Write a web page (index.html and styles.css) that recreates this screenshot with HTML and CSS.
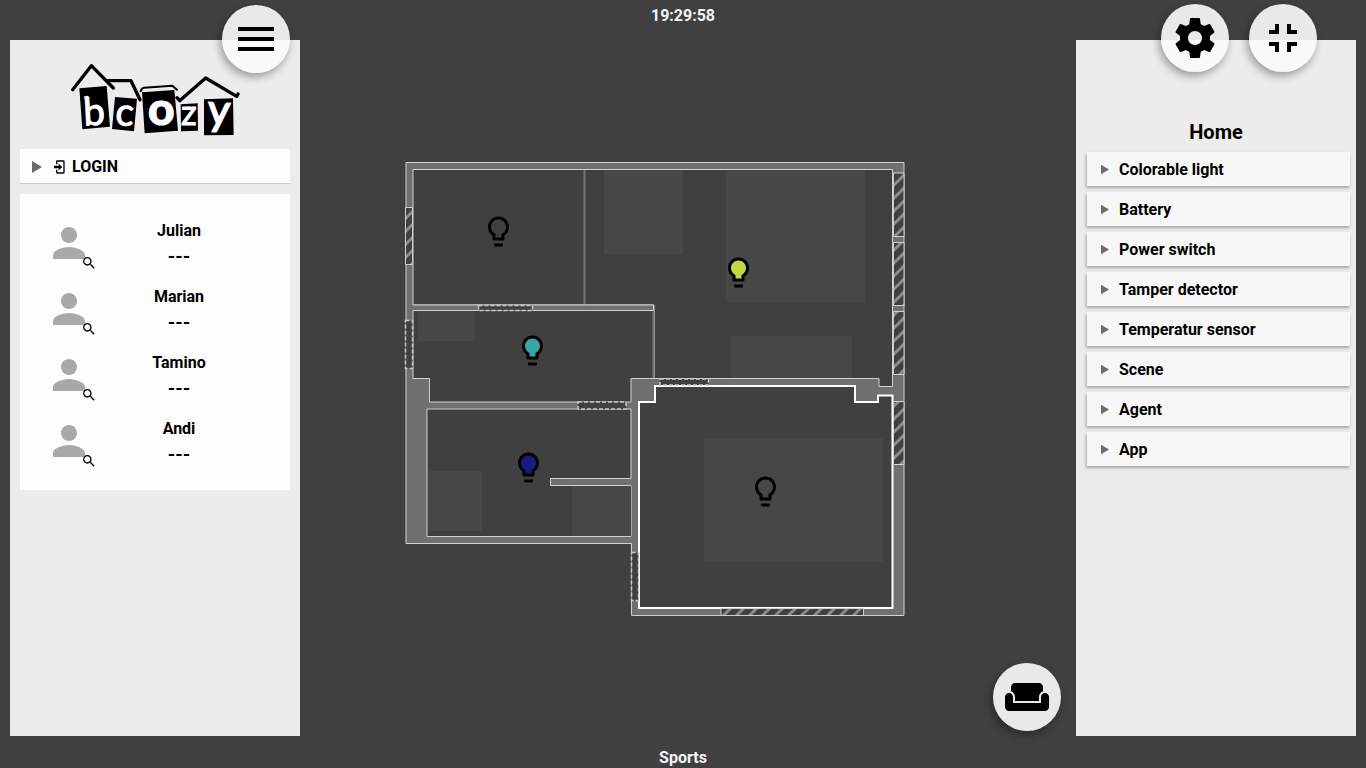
FILE: index.html
```html
<!DOCTYPE html>
<html lang="en">
<head>
<meta charset="utf-8">
<meta name="viewport" content="width=device-width, initial-scale=1">
<title>bcozy</title>
<link rel="stylesheet" href="styles.css">
</head>
<body>
<svg class="defs" aria-hidden="true">
  <symbol id="person" viewBox="0 0 24 24"><path d="M12 12c2.21 0 4-1.79 4-4s-1.790-4-4-4-4 1.790-4 4 1.790 4 4 4zm0 2c-2.670 0-8 1.340-8 4v2h16v-2c0-2.660-5.330-4-8-4z"/></symbol>
  <symbol id="search" viewBox="0 0 24 24"><path d="M15.5 14h-.79l-.28-.27C15.410 12.590 16 11.110 16 9.500 16 5.910 13.090 3 9.500 3S3 5.910 3 9.500 5.910 16 9.500 16c1.610 0 3.090-.59 4.230-1.570l.27.28v.79l5 4.990L20.490 19l-4.990-5zm-6 0C7.010 14 5 11.990 5 9.500S7.010 5 9.500 5 14 7.010 14 9.500 11.990 14 9.500 14z"/></symbol>
  <symbol id="bulb" viewBox="0 0 24 24">
    <path class="glow" d="M12 3a6 6 0 0 0-3 11.200V17h6v-2.800A6 6 0 0 0 12 3z"/>
    <path d="M9 21c0 .55.45 1 1 1h4c.55 0 1-.45 1-1v-1H9v1zm3-19C8.140 2 5 5.140 5 9c0 2.380 1.190 4.470 3 5.740V17c0 .55.45 1 1 1h6c.55 0 1-.45 1-1v-2.260c1.810-1.270 3-3.360 3-5.740 0-3.860-3.140-7-7-7zm2.850 11.100l-.85.6V16h-4v-2.300l-.85-.6C7.800 12.160 7 10.630 7 9c0-2.760 2.240-5 5-5s5 2.240 5 5c0 1.630-.8 3.160-2.150 4.100z"/>
  </symbol>
</svg>
<div class="app">
  <header class="bar clock"><time>19:29:58</time></header>
  <main class="main">
    <aside class="panel panel-left">
      <button class="fab fab-menu" aria-label="Menu"><svg class="icon" viewBox="0 0 24 24"><path d="M3 18h18v-2H3v2zm0-5h18v-2H3v2zm0-7v2h18V6H3z"/></svg></button>
      <svg class="logo" viewBox="30 20 510 225" role="img" aria-label="bcozy">
        <path d="M58 99L140 92 150 214 67 222zM165 125L231 130 222 228 156 221zM246 111L343 104 354 226 254 234zM362 147L413 144 414 226 363 228zM432 132L519 129 521 239 432 240z"/>
        <g class="roofs">
          <path d="M38 103L94 31 160 98"/>
          <path d="M145 76H213L240 133"/>
          <path class="thin" d="M242 108Q245 98 252 97L337 91 351 103"/>
          <path d="M351 127L359 136 437 68 530 123 534 116"/>
        </g>
        <g class="letters">
          <path class="serif" d="M73 127L84 125"/>
          <text x="70" y="209" transform="rotate(-3 106 170)">b</text>
          <text x="166" y="210" transform="rotate(4 193 180)">c</text>
          <text class="heavy" x="264" y="209">o</text>
          <text class="z" x="363" y="210">z</text>
          <text class="y" x="443" y="208" transform="rotate(3 478 180)">y</text>
        </g>
      </svg>
      <button class="login">
        <svg class="arrow" viewBox="0 0 10 12"><path d="M0 0L10 6 0 12z"/></svg>
        <svg class="login-icon" viewBox="0 0 24 24"><path d="M10 17.250V14H3V10H10V6.750L15.250 12 10 17.250M8 2H17A2 2 0 0 1 19 4V20A2 2 0 0 1 17 22H8A2 2 0 0 1 6 20V16H8V20H17V4H8V8H6V4A2 2 0 0 1 8 2Z"/></svg>
        LOGIN
      </button>
      <ul class="users">
        <li class="user"><span class="avatar"><svg class="person"><use href="#person"/></svg><svg class="search"><use href="#search"/></svg></span><span class="who"><span>Julian</span><span class="state">---</span></span></li>
        <li class="user"><span class="avatar"><svg class="person"><use href="#person"/></svg><svg class="search"><use href="#search"/></svg></span><span class="who"><span>Marian</span><span class="state">---</span></span></li>
        <li class="user"><span class="avatar"><svg class="person"><use href="#person"/></svg><svg class="search"><use href="#search"/></svg></span><span class="who"><span>Tamino</span><span class="state">---</span></span></li>
        <li class="user"><span class="avatar"><svg class="person"><use href="#person"/></svg><svg class="search"><use href="#search"/></svg></span><span class="who"><span>Andi</span><span class="state">---</span></span></li>
      </ul>
    </aside>

    <section class="stage" aria-label="Floor plan">
      <svg class="plan" viewBox="404 160 502 456">
        <defs>
          <pattern id="hatch" width="13" height="13" patternUnits="userSpaceOnUse">
            <rect class="floor" width="13" height="13"/>
            <path class="stripe" d="M-2 15L15 -2M-2 2L2 -2M11 15L15 11"/>
          </pattern>
        </defs>
        <path class="wall" d="M406 162.500H904V615.500H631.500V543.500H406z"/>
        <path class="room" d="M413 169.500H892.500V386.500H879V378.500H654V305H413z"/>
        <path class="room" d="M413 310.500H654V378.500H631V402H429.500V378.500H413z"/>
        <path class="room" d="M427 409H631V478.500H550.500V485.500H631V536.500H427z"/>
        <g class="area">
          <path d="M604 170h79v84h-79zM726 170h139v132H726zM731 336h121v42H731zM418 311h57v30h-57zM428 471h54v60h-54zM572 486h59v50h-59z"/>
        </g>
        <path class="divider" d="M584.500 170V304.500"/>
        <path class="divider" d="M653.500 310V378"/>
        <path class="wall" d="M413 305H653.500V310.500H413"/>
        <path class="room active" d="M639 402H655V386H855V402H878V395.500H892.500V608H639z"/>
        <g class="area"><path d="M704 438h179v124H704z"/></g>
        <g class="window">
          <path d="M893.500 173H904V236.500H893.500zM893.500 242.500H904V305.500H893.500zM893.500 311.500H904V374.500H893.500zM893.500 401.500H904V464.500H893.500z"/>
          <path d="M405.500 207.500H412.500V264.500H405.500zM721 608.500H863.500V615.500H721z"/>
        </g>
        <g class="door">
          <path d="M478.500 305.500H532.500V310.500H478.500z"/>
          <path d="M578 402H626V409H578z"/>
          <path d="M405.500 320.500H412.500V368.500H405.500z"/>
          <path d="M660 379H708.500V385H660z"/>
          <path d="M631.500 552.500H638.500V600.500H631.500z"/>
        </g>
        <use class="bulb" href="#bulb" x="480.500" y="213.500" width="36" height="36"/>
        <use class="bulb yellow" href="#bulb" x="720.500" y="254.500" width="36" height="36"/>
        <use class="bulb teal" href="#bulb" x="514.500" y="332.500" width="36" height="36"/>
        <use class="bulb blue" href="#bulb" x="510.500" y="449.500" width="36" height="36"/>
        <use class="bulb" href="#bulb" x="747.500" y="473.500" width="36" height="36"/>
      </svg>
      <button class="fab fab-sofa" aria-label="Rooms"><svg class="icon" viewBox="0 0 24 24"><path d="M21 10c-1.100 0-2 .9-2 2v3H5v-3c0-1.100-.9-2-2-2s-2 .9-2 2v5c0 1.100.9 2 2 2h18c1.100 0 2-.9 2-2v-5c0-1.100-.9-2-2-2zm-3-5H6c-1.100 0-2 .9-2 2v2.150c1.160.41 2 1.510 2 2.820V14h12v-2.030c0-1.300.84-2.400 2-2.820V7c0-1.100-.9-2-2-2z"/></svg></button>
    </section>

    <aside class="panel panel-right">
      <div class="tools">
        <button class="fab" aria-label="Settings"><svg class="icon" viewBox="0 0 24 24"><path d="M19.430 12.980c.04-.32.07-.64.07-.98s-.03-.66-.07-.98l2.110-1.650c.19-.15.24-.42.12-.64l-2-3.460c-.12-.22-.39-.3-.61-.22l-2.490 1c-.52-.4-1.080-.73-1.690-.98l-.38-2.650C14.460 2.180 14.250 2 14 2h-4c-.25 0-.46.18-.49.42l-.38 2.650c-.61.25-1.170.59-1.690.98l-2.490-1c-.23-.09-.49 0-.61.22l-2 3.460c-.13.22-.07.49.12.64l2.110 1.650c-.04.32-.07.65-.07.98s.03.66.07.98l-2.110 1.650c-.19.15-.24.42-.12.64l2 3.460c.12.22.39.3.61.22l2.490-1c.52.4 1.080.73 1.690.98l.38 2.650c.03.24.24.42.49.42h4c.25 0 .46-.18.49-.42l.38-2.650c.61-.25 1.170-.59 1.690-.98l2.490 1c.23.09.49 0 .61-.22l2-3.460c.12-.22.07-.49-.12-.64l-2.110-1.650zM12 15.500c-1.930 0-3.500-1.570-3.500-3.500s1.570-3.500 3.500-3.500 3.500 1.570 3.500 3.500-1.570 3.500-3.500 3.500z"/></svg></button>
        <button class="fab" aria-label="Exit full screen"><svg class="icon" viewBox="0 0 24 24"><path d="M5 16h3v3h2v-5H5v2zm3-8H5v2h5V5H8v3zm6 11h2v-3h3v-2h-5v5zm2-11V5h-2v5h5V8h-3z"/></svg></button>
      </div>
      <h1 class="title">Home</h1>
      <div class="groups">
        <button class="group"><svg class="caret" viewBox="0 0 10 12"><path d="M0 0L10 6 0 12z"/></svg>Colorable light</button>
        <button class="group"><svg class="caret" viewBox="0 0 10 12"><path d="M0 0L10 6 0 12z"/></svg>Battery</button>
        <button class="group"><svg class="caret" viewBox="0 0 10 12"><path d="M0 0L10 6 0 12z"/></svg>Power switch</button>
        <button class="group"><svg class="caret" viewBox="0 0 10 12"><path d="M0 0L10 6 0 12z"/></svg>Tamper detector</button>
        <button class="group"><svg class="caret" viewBox="0 0 10 12"><path d="M0 0L10 6 0 12z"/></svg>Temperatur sensor</button>
        <button class="group"><svg class="caret" viewBox="0 0 10 12"><path d="M0 0L10 6 0 12z"/></svg>Scene</button>
        <button class="group"><svg class="caret" viewBox="0 0 10 12"><path d="M0 0L10 6 0 12z"/></svg>Agent</button>
        <button class="group"><svg class="caret" viewBox="0 0 10 12"><path d="M0 0L10 6 0 12z"/></svg>App</button>
      </div>
    </aside>
  </main>
  <footer class="bar status">Sports</footer>
</div>
</body>
</html>
```
FILE: styles.css
```css
* { box-sizing: border-box; }
body {
  margin: 0;
  background: #404040;
  color: #000;
  font: 700 16px/20px Roboto, sans-serif;
}
button {
  border: 0;
  padding: 0;
  color: inherit;
  font: inherit;
  cursor: pointer;
}
svg { display: block; flex: none; }
.defs { position: absolute; width: 0; height: 0; }

.app { display: flex; flex-direction: column; min-height: 100vh; padding: 0 10px; }
.bar { color: #f4f4f4; text-align: center; }
.clock { height: 40px; padding-top: 6px; }
.status { height: 32px; padding-top: 12px; }
.main { flex: 1; display: flex; }

.panel { position: relative; background: #ececec; }
.panel-left { width: 290px; padding: 22px 10px 10px; }
.panel-right { width: 280px; padding: 80px 6px 10px 11px; }

.fab {
  display: flex;
  align-items: center;
  justify-content: center;
  width: 68px;
  height: 68px;
  border-radius: 50%;
  background: rgba(250, 250, 250, .91);
  box-shadow: -2px 4px 8px rgba(0, 0, 0, .35);
}
.icon { width: 48px; height: 48px; }
.fab-menu { position: absolute; top: -35px; right: 10px; }
.fab-sofa { position: absolute; right: 15px; bottom: 5px; }
.tools { position: absolute; top: -36px; right: 39px; display: flex; gap: 20px; }

.logo { width: 170px; height: 75px; margin: 0 auto 12px 50px; }
.roofs path { fill: none; stroke: #000; stroke-width: 10; stroke-linecap: round; stroke-linejoin: round; }
.roofs .thin { stroke-width: 6; }
.letters { fill: #fff; stroke: #fff; stroke-width: 3; font-family: Lato, sans-serif; font-size: 115px; font-weight: 400; }
.letters .serif { stroke-width: 7; }
.letters .z { font-size: 104px; }
.letters .heavy { font-size: 138px; font-weight: 900; }
.letters .y { font-size: 128px; stroke-width: 5; }

.login {
  display: flex;
  align-items: center;
  width: 100%;
  height: 35px;
  padding: 1px 0 0 12px;
  background: #fdfdfd;
  border-bottom: 1px solid #c8c8c8;
}
.arrow { width: 10px; height: 12px; margin-right: 10px; fill: #6c6c6c; }
.login-icon { width: 16px; height: 16px; margin-right: 4px; }

.users { margin: 10px 0 0; padding: 16px 0; background: #fdfdfd; list-style: none; }
.user { display: flex; height: 66px; padding: 9px 25px; }
.avatar { position: relative; width: 48px; height: 48px; }
.person { width: 48px; height: 48px; fill: #a9a9a9; }
.search { position: absolute; left: 36px; top: 36px; width: 16px; height: 16px; }
.who { flex: 1; display: flex; flex-direction: column; gap: 6px; padding-top: 2px; text-align: center; }
.state { font-size: 19px; }

.stage { position: relative; flex: 1; min-width: 0; display: flex; align-items: center; justify-content: center; padding-right: 66px; }
.plan { width: 502px; max-width: 100%; height: auto; flex: 0 1 auto; }
.wall { fill: #707070; stroke: #d0d0d0; }
.floor { fill: #404040; }
.room { fill: #404040; stroke: #d0d0d0; }
.active { stroke: #fff; stroke-width: 2; }
.area { fill: #474747; }
.divider { stroke: #747474; stroke-width: 2; }
.window { fill: url(#hatch); stroke: #d0d0d0; }
.stripe { fill: none; stroke: #8c8c8c; stroke-width: 3; }
.door { fill: #404040; stroke: #c8c8c8; stroke-width: 1.5; stroke-dasharray: 4 2; }
.glow { fill: var(--glow, none); }
.yellow { --glow: #c6d545; }
.teal { --glow: #37a5a3; }
.blue { --glow: #1e1880; }

.title { margin: 0 0 8px; padding-right: 5px; font-size: 20px; line-height: 24px; text-align: center; }
.groups { display: flex; flex-direction: column; gap: 6px; }
.group {
  display: flex;
  align-items: center;
  height: 34px;
  padding: 1px 0 0 14px;
  background: #f7f7f7;
  box-shadow: -1px 2px 3px rgba(0, 0, 0, .3);
}
.caret { width: 8px; height: 11px; margin-right: 10px; fill: #6c6c6c; }
```
